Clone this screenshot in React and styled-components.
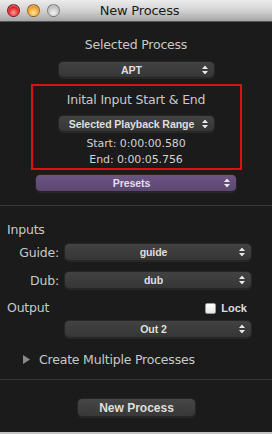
import React from "react";
import styled, { createGlobalStyle, css } from "styled-components";

const Global = createGlobalStyle`
  html, body { margin: 0; padding: 0; background: #1b1b1b; }
  body { width: 272px; height: 434px; overflow: hidden; }
  * { box-sizing: border-box; }
`;

const FONT = `"Lucida Grande", "DejaVu Sans", sans-serif`;
const BOLD_FONT = `"Lucida Grande", "Liberation Sans", Arial, sans-serif`;

const Window = styled.div`
  width: 272px;
  height: 434px;
  display: flex;
  flex-direction: column;
  background: #1b1b1b;
  font-family: ${FONT};
  border-bottom: 2px solid #c4c4c4;
`;

const TitleBar = styled.div`
  height: 22px;
  flex: none;
  display: grid;
  grid-template-columns: 1fr auto 1fr;
  align-items: center;
  background: linear-gradient(#ececec, #d2d2d2 50%, #a6a6a6);
  border-bottom: 1px solid #555;
  padding: 0 0 0 7px;
`;

const Lights = styled.div`
  display: flex;
  gap: 7px;
  align-items: center;
`;

const colors = {
  red: ["#ff9a9a", "#e0242a", "#7a0c10"],
  orange: ["#ffe9a0", "#f2a22a", "#a8540a"],
  grey: ["#f4f4f4", "#c4c4c4", "#8c8c8c"],
};

const Light = styled.span`
  width: 13px;
  height: 13px;
  border-radius: 50%;
  ${({ $c }) => css`
    background: radial-gradient(circle at 50% 70%, ${colors[$c][0]} 0%, ${colors[$c][1]} 55%, ${colors[$c][2]} 100%);
  `}
  border: 1px solid rgba(0,0,0,0.35);
  box-shadow: inset 0 1px 1px rgba(255,255,255,0.5);
`;

const Title = styled.div`
  font-size: 13px;
  color: #1a1a1a;
  letter-spacing: -0.2px;
`;

const Body = styled.div`
  flex: 1;
  display: flex;
  flex-direction: column;
`;

const Heading = styled.div`
  color: #c9c9c9;
  font-size: 12.5px;
  text-align: center;
  line-height: 16px;
  letter-spacing: -0.2px;
`;

const Section = styled.div`
  display: flex;
  flex-direction: column;
  align-items: center;
  padding-top: ${({ $pt }) => $pt}px;
`;

const HighlightBox = styled.div`
  width: 211px;
  margin-top: 6px;
  border: 2px solid #e01010;
  display: flex;
  flex-direction: column;
  align-items: center;
  padding-top: 6px;
  height: 86px;
`;

const Popup = styled.div`
  position: relative;
  width: ${({ $w }) => $w}px;
  height: ${({ $h }) => $h || 17}px;
  margin-top: ${({ $mt }) => $mt || 0}px;
  padding-right: 9px;
  border-radius: 5px;
  display: flex;
  align-items: center;
  justify-content: center;
  font-family: ${BOLD_FONT};
  font-weight: bold;
  font-size: 10.6px;
  letter-spacing: -0.1px;
  border: 1px solid #262626;
  box-shadow: 0 1px 0 rgba(255,255,255,0.06);
  background: ${({ $purple }) =>
    $purple
      ? "linear-gradient(#6c5482, #5c4672)"
      : "linear-gradient(#424242, #363636)"};
  color: ${({ $purple }) => ($purple ? "#e4dcea" : "#dedede")};
`;

const Arrows = styled.svg`
  position: absolute;
  right: 6px;
  top: 50%;
  transform: translateY(-50%);
`;

const PopupArrows = () => (
  <Arrows width="6" height="9" viewBox="0 0 6 9">
    <path d="M3 0 L6 3.6 L0 3.6 Z M3 9 L6 5.4 L0 5.4 Z" fill="#e8e8e8" />
  </Arrows>
);

const Time = styled.div`
  color: #d2d2d2;
  font-size: 11px;
  line-height: 16px;
  letter-spacing: -0.1px;
  margin-top: ${({ $mt }) => $mt || 0}px;
`;

const Separator = styled.div`
  height: 1px;
  background: #383838;
  margin-top: ${({ $mt }) => $mt}px;
`;

const Label = styled.div`
  color: #c9c9c9;
  font-size: 12.5px;
  line-height: 16px;
  letter-spacing: -0.2px;
`;

const Block = styled.div`
  display: flex;
  flex-direction: column;
  padding: 0 20px 0 7px;
  margin-top: ${({ $mt }) => $mt}px;
`;

const FieldRow = styled.div`
  display: grid;
  grid-template-columns: 52px 1fr;
  column-gap: 5px;
  align-items: center;
  margin-top: ${({ $mt }) => $mt}px;
`;

const FieldLabel = styled.div`
  color: #c9c9c9;
  font-size: 12.5px;
  text-align: right;
  letter-spacing: -0.2px;
`;

const OutputHeader = styled.div`
  display: flex;
  justify-content: space-between;
  align-items: center;
  margin-top: ${({ $mt }) => $mt}px;
`;

const LockWrap = styled.div`
  display: flex;
  align-items: center;
  gap: 5px;
  color: #dedede;
  font-family: ${BOLD_FONT};
  font-size: 11px;
  font-weight: bold;
  padding-right: 5px;
`;

const Check = styled.span`
  width: 11px;
  height: 11px;
  border-radius: 2px;
  background: linear-gradient(#ffffff, #e6e6e6);
  border: 1px solid #9a9a9a;
`;

const Disclosure = styled.div`
  display: flex;
  align-items: center;
  gap: 9px;
  padding-left: 23px;
  color: #c9c9c9;
  font-size: 12.5px;
  letter-spacing: -0.2px;
  margin-top: ${({ $mt }) => $mt}px;
`;

const Tri = styled.svg`
  flex: none;
`;

const ButtonRow = styled.div`
  display: flex;
  justify-content: center;
  margin-top: ${({ $mt }) => $mt}px;
  padding-left: 1px;
`;

const Button = styled.div`
  width: 119px;
  height: 19px;
  border-radius: 5px;
  border: 1px solid #262626;
  background: linear-gradient(#464646, #383838);
  color: #dedede;
  font-family: ${BOLD_FONT};
  font-weight: bold;
  font-size: 12px;
  display: flex;
  align-items: center;
  justify-content: center;
  box-shadow: 0 1px 0 rgba(255,255,255,0.06);
`;

export default function App() {
  return (
    <>
      <Global />
      <Window>
        <TitleBar>
          <Lights>
            <Light $c="red" />
            <Light $c="orange" />
            <Light $c="grey" />
          </Lights>
          <Title>New Process</Title>
          <div />
        </TitleBar>
        <Body>
          <Section $pt={15}>
            <Heading>Selected Process</Heading>
            <Popup $w={157} $mt={8}>
              APT
              <PopupArrows />
            </Popup>
            <HighlightBox>
              <Heading>Inital Input Start &amp; End</Heading>
              <Popup $w={157} $mt={7} $h={18}>
                Selected Playback Range
                <PopupArrows />
              </Popup>
              <Time $mt={4}>Start: 0:00:00.580</Time>
              <Time>End: 0:00:05.756</Time>
            </HighlightBox>
            <Popup $w={202} $mt={4} $h={18} $purple>
              Presets
              <PopupArrows />
            </Popup>
          </Section>
          <Separator $mt={13} />
          <Block $mt={16}>
            <Label>Inputs</Label>
            <FieldRow $mt={5}>
              <FieldLabel>Guide:</FieldLabel>
              <Popup $w={188} $h={18}>
                guide
                <PopupArrows />
              </Popup>
            </FieldRow>
            <FieldRow $mt={10}>
              <FieldLabel>Dub:</FieldLabel>
              <Popup $w={188} $h={18}>
                dub
                <PopupArrows />
              </Popup>
            </FieldRow>
            <OutputHeader $mt={11}>
              <Label>Output</Label>
              <LockWrap>
                <Check />
                Lock
              </LockWrap>
            </OutputHeader>
            <FieldRow $mt={4}>
              <div />
              <Popup $w={188} $h={18}>
                Out 2
                <PopupArrows />
              </Popup>
            </FieldRow>
          </Block>
          <Disclosure $mt={14}>
            <Tri width="7" height="9" viewBox="0 0 7 9">
              <path d="M0 0 L7 4.5 L0 9 Z" fill="#8a8a8a" />
            </Tri>
            Create Multiple Processes
          </Disclosure>
          <Separator $mt={12} />
          <ButtonRow $mt={18}>
            <Button>New Process</Button>
          </ButtonRow>
        </Body>
      </Window>
    </>
  );
}
